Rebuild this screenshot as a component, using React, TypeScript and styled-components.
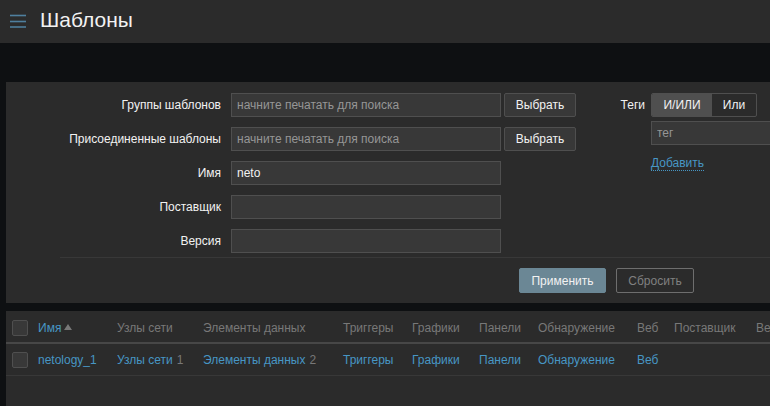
import React from "react";
import styled, { createGlobalStyle } from "styled-components";

const GlobalStyle = createGlobalStyle`
  html, body {
    margin: 0;
    padding: 0;
    background: #0e1012;
    overflow: hidden;
  }
  body {
    font-family: "Liberation Sans", Arial, sans-serif;
    font-size: 12px;
    color: #f2f2f2;
  }
`;

type Column = { title: string; width: number; sorted?: boolean };

const columns: Column[] = [
  { title: "Имя", width: 79, sorted: true },
  { title: "Узлы сети", width: 86 },
  { title: "Элементы данных", width: 140 },
  { title: "Триггеры", width: 69 },
  { title: "Графики", width: 67 },
  { title: "Панели", width: 59 },
  { title: "Обнаружение", width: 99 },
  { title: "Веб", width: 37 },
  { title: "Поставщик", width: 82 },
  { title: "Версия", width: 80 },
  { title: "Теги", width: 120 },
];

type Cell = { text: string; count?: number };

const row: Cell[] = [
  { text: "netology_1" },
  { text: "Узлы сети", count: 1 },
  { text: "Элементы данных", count: 2 },
  { text: "Триггеры" },
  { text: "Графики" },
  { text: "Панели" },
  { text: "Обнаружение" },
  { text: "Веб" },
  { text: "" },
  { text: "" },
  { text: "" },
];

const checkboxCol = 26;
const tableWidth = columns.reduce((sum, c) => sum + c.width, checkboxCol);

function MenuIcon() {
  return (
    <svg width="16" height="14" viewBox="0 0 16 14">
      <g stroke="#4f7f9e" strokeWidth="1.6">
        <line x1="0" y1="1.5" x2="16" y2="1.5" />
        <line x1="0" y1="7.5" x2="16" y2="7.5" />
        <line x1="0" y1="13" x2="16" y2="13" />
      </g>
    </svg>
  );
}

export default function App() {
  return (
    <Page>
      <GlobalStyle />
      <Header>
        <MenuButton>
          <MenuIcon />
        </MenuButton>
        <Title>Шаблоны</Title>
      </Header>

      <FilterPanel>
        <FilterColumns>
          <FormGrid>
            <Label>Группы шаблонов</Label>
            <Field>
              <TextInput placeholder="начните печатать для поиска" />
              <Button>Выбрать</Button>
            </Field>
            <Label>Присоединенные шаблоны</Label>
            <Field>
              <TextInput placeholder="начните печатать для поиска" />
              <Button>Выбрать</Button>
            </Field>
            <Label>Имя</Label>
            <Field>
              <TextInput defaultValue="neto" />
            </Field>
            <Label>Поставщик</Label>
            <Field>
              <TextInput />
            </Field>
            <Label>Версия</Label>
            <Field>
              <TextInput />
            </Field>
          </FormGrid>

          <TagsGrid>
            <Label>Теги</Label>
            <TagsBody>
              <Segmented>
                <Segment $active $width={60}>
                  И/ИЛИ
                </Segment>
                <Segment $width={44}>Или</Segment>
              </Segmented>
              <TagRow>
                <TagInput placeholder="тег" />
              </TagRow>
              <AddLink>Добавить</AddLink>
            </TagsBody>
          </TagsGrid>
        </FilterColumns>

        <Separator />

        <Actions>
          <PrimaryButton>Применить</PrimaryButton>
          <OutlineButton>Сбросить</OutlineButton>
        </Actions>
      </FilterPanel>

      <TablePanel>
        <Table style={{ width: tableWidth }}>
          <colgroup>
            <col style={{ width: checkboxCol }} />
            {columns.map((c) => (
              <col key={c.title} style={{ width: c.width }} />
            ))}
          </colgroup>
          <thead>
            <tr>
              <HeadCell>
                <Checkbox />
              </HeadCell>
              {columns.map((c) => (
                <HeadCell key={c.title}>
                  {c.sorted ? (
                    <SortLink>
                      {c.title}
                      <SortArrow />
                    </SortLink>
                  ) : (
                    c.title
                  )}
                </HeadCell>
              ))}
            </tr>
          </thead>
          <tbody>
            <tr>
              <BodyCell>
                <Checkbox />
              </BodyCell>
              {row.map((c, i) => (
                <BodyCell key={i}>
                  {c.text && <Link>{c.text}</Link>}
                  {c.count !== undefined && <Count>{c.count}</Count>}
                </BodyCell>
              ))}
            </tr>
          </tbody>
        </Table>
      </TablePanel>
    </Page>
  );
}

const Page = styled.div`
  min-width: 1100px;
  height: 406px;
  display: flex;
  flex-direction: column;
`;

const Header = styled.header`
  height: 43px;
  background: #2b2b2b;
  display: flex;
  align-items: center;
  padding-left: 10px;
  gap: 14px;
`;

const MenuButton = styled.div`
  width: 16px;
  height: 14px;
  display: flex;
  margin-top: -2px;
`;

const Title = styled.h1`
  margin: 0;
  font-size: 21px;
  font-weight: normal;
  color: #f2f2f2;
  margin-top: -3px;
`;

const FilterPanel = styled.section`
  margin: 39px 0 0 6px;
  background: #2b2b2b;
  padding: 11px 0 10px;
`;

const FilterColumns = styled.div`
  display: flex;
  align-items: flex-start;
  gap: 9px;
`;

const FormGrid = styled.div`
  display: grid;
  grid-template-columns: 215px auto;
  grid-auto-rows: 24px;
  column-gap: 10px;
  row-gap: 10px;
  align-items: center;
`;

const Label = styled.label`
  text-align: right;
  color: #f2f2f2;
`;

const Field = styled.div`
  display: flex;
  gap: 3px;
  height: 24px;
`;

const TextInput = styled.input`
  box-sizing: border-box;
  width: 270px;
  height: 24px;
  background: #383838;
  border: 1px solid #4f4f4f;
  color: #f2f2f2;
  font: inherit;
  padding: 0 5px;
  outline: none;

  &::placeholder {
    color: #969696;
  }
`;

const Button = styled.button`
  box-sizing: border-box;
  width: 72px;
  height: 24px;
  background: #383838;
  border: 1px solid #4f4f4f;
  border-radius: 2px;
  color: #f2f2f2;
  font: inherit;
  padding: 0;
`;

const TagsGrid = styled.div`
  display: grid;
  grid-template-columns: 60px auto;
  column-gap: 6px;
  align-items: start;

  & > ${Label} {
    line-height: 24px;
  }
`;

const TagsBody = styled.div`
  display: flex;
  flex-direction: column;
  align-items: flex-start;
  gap: 4px;
`;

const Segmented = styled.div`
  display: flex;
  box-sizing: border-box;
  height: 24px;
  border: 1px solid #4f4f4f;
  border-radius: 2px;
  overflow: hidden;
`;

const Segment = styled.span<{ $active?: boolean; $width: number }>`
  display: flex;
  align-items: center;
  justify-content: center;
  width: ${({ $width }) => $width}px;
  background: ${({ $active }) => ($active ? "#4f4f4f" : "transparent")};
  color: #f2f2f2;
`;

const TagRow = styled.div`
  display: flex;
  gap: 5px;
`;

const TagInput = styled(TextInput)`
  width: 200px;
`;

const AddLink = styled.a`
  margin-top: 8px;
  color: #4796c4;
  border-bottom: 1px dotted #4796c4;
  line-height: 13px;
  cursor: pointer;
`;

const Separator = styled.hr`
  margin: 4px 0 0 54px;
  border: none;
  border-top: 1px solid #383838;
`;

const Actions = styled.div`
  display: flex;
  gap: 10px;
  padding: 10px 0 0 513px;
`;

const PrimaryButton = styled.button`
  box-sizing: border-box;
  width: 87px;
  height: 25px;
  background: #6b8795;
  border: 1px solid #6b8795;
  border-radius: 2px;
  color: #f2f2f2;
  font: inherit;
  font-size: 12px;
`;

const OutlineButton = styled.button`
  box-sizing: border-box;
  width: 78px;
  height: 25px;
  background: transparent;
  border: 1px solid #6e6e6e;
  border-radius: 2px;
  color: #808080;
  font: inherit;
  font-size: 12px;
`;

const TablePanel = styled.section`
  flex: 1;
  margin: 8px 0 0 6px;
  background: #2b2b2b;
  padding-top: 2px;
`;

const Table = styled.table`
  table-layout: fixed;
  border-collapse: collapse;
`;

const HeadCell = styled.th`
  height: 29px;
  padding: 0 0 0 6px;
  text-align: left;
  font-weight: normal;
  color: #787878;
  white-space: nowrap;
  overflow: hidden;
  border-bottom: 2px solid #474747;
`;

const BodyCell = styled.td`
  height: 30px;
  padding: 1px 0 0 6px;
  white-space: nowrap;
  overflow: hidden;
  border-bottom: 1px solid #383838;
`;

const Checkbox = styled.span`
  display: block;
  box-sizing: border-box;
  width: 16px;
  height: 16px;
  background: #383838;
  border: 1px solid #4f4f4f;
  border-radius: 2px;
`;

const SortLink = styled.span`
  color: #4796c4;
  display: inline-flex;
  align-items: center;
  gap: 3px;
`;

const SortArrow = styled.span`
  width: 0;
  height: 0;
  margin-top: -1px;
  border-left: 4px solid transparent;
  border-right: 4px solid transparent;
  border-bottom: 6px solid #787878;
`;

const Link = styled.a`
  color: #4796c4;
`;

const Count = styled.sup`
  vertical-align: baseline;
  color: #787878;
  font-size: 12px;
  margin-left: 4px;
`;
